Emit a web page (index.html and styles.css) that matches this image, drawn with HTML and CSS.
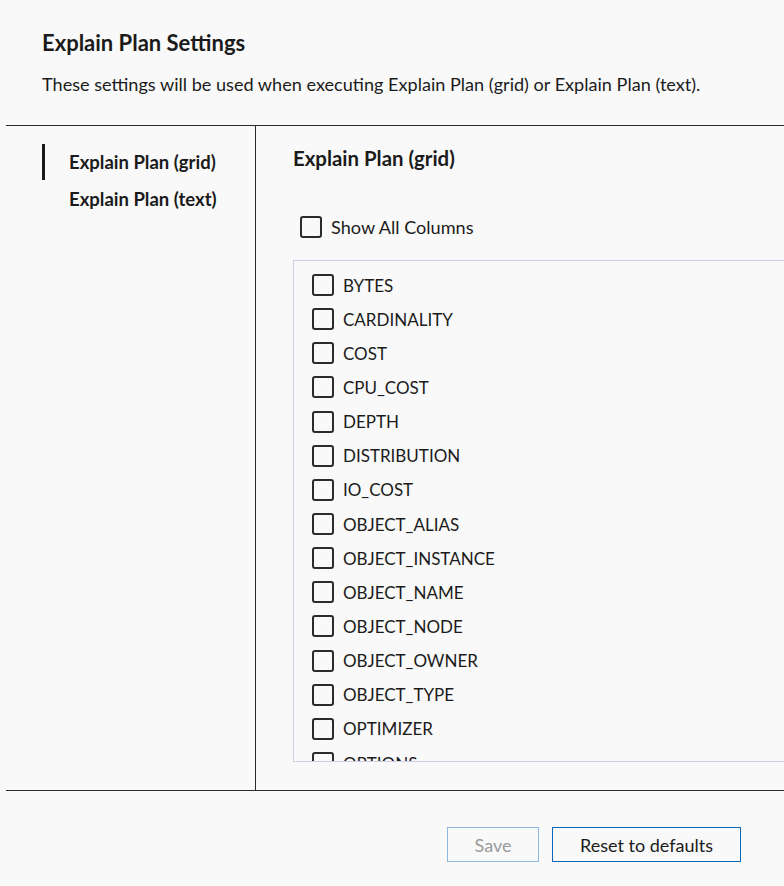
FILE: index.html
```html
<!DOCTYPE html>
<html>
<head>
<meta charset="utf-8">
<link rel="stylesheet" href="styles.css">
</head>
<body>
<div class="page">
  <header class="header">
    <h1 class="title">Explain Plan Settings</h1>
    <p class="desc">These settings will be used when executing Explain Plan (grid) or Explain Plan (text).</p>
  </header>
  <div class="main">
    <nav class="nav">
      <div class="nav-item active">Explain Plan (grid)</div>
      <div class="nav-item">Explain Plan (text)</div>
    </nav>
    <section class="pane">
      <h2 class="pane-title">Explain Plan (grid)</h2>
      <label class="check show-all"><span class="box"></span><span>Show All Columns</span></label>
      <div class="list">
        <label class="check row"><span class="box"></span><span>BYTES</span></label>
        <label class="check row"><span class="box"></span><span>CARDINALITY</span></label>
        <label class="check row"><span class="box"></span><span>COST</span></label>
        <label class="check row"><span class="box"></span><span>CPU_COST</span></label>
        <label class="check row"><span class="box"></span><span>DEPTH</span></label>
        <label class="check row"><span class="box"></span><span>DISTRIBUTION</span></label>
        <label class="check row"><span class="box"></span><span>IO_COST</span></label>
        <label class="check row"><span class="box"></span><span>OBJECT_ALIAS</span></label>
        <label class="check row"><span class="box"></span><span>OBJECT_INSTANCE</span></label>
        <label class="check row"><span class="box"></span><span>OBJECT_NAME</span></label>
        <label class="check row"><span class="box"></span><span>OBJECT_NODE</span></label>
        <label class="check row"><span class="box"></span><span>OBJECT_OWNER</span></label>
        <label class="check row"><span class="box"></span><span>OBJECT_TYPE</span></label>
        <label class="check row"><span class="box"></span><span>OPTIMIZER</span></label>
        <label class="check row"><span class="box"></span><span>OPTIONS</span></label>
      </div>
    </section>
  </div>
  <footer class="footer">
    <button class="btn btn-disabled" disabled>Save</button>
    <button class="btn btn-primary">Reset to defaults</button>
  </footer>
</div>
</body>
</html>
```

FILE: styles.css
```css
html, body {
  margin: 0;
  padding: 0;
  background: #f9f9f9;
  overflow: hidden;
}
body {
  font-family: Lato, "Open Sans", sans-serif;
  color: #1b1b1b;
  width: 784px;
  height: 886px;
}
.page {
  display: flex;
  flex-direction: column;
  padding-left: 6px;
}
.header {
  padding: 28px 0 0 36px;
  height: 97px;
  border-bottom: 1px solid #2b2b2b;
}
.title {
  margin: 0;
  font-size: 22px;
  font-weight: 700;
  line-height: 30px;
}
.desc {
  margin: 15px 0 0;
  font-size: 18.1px;
  line-height: 22px;
}
.main {
  display: flex;
  height: 664px;
  border-bottom: 1px solid #2b2b2b;
}
.nav {
  flex: none;
  width: 250px;
  border-right: 1px solid #2b2b2b;
  padding: 18px 0 0 36px;
  box-sizing: border-box;
}
.nav-item {
  font-size: 18.5px;
  font-weight: 700;
  line-height: 20px;
  padding: 8px 0 8px 24px;
  border-left: 3px solid transparent;
  white-space: nowrap;
}
.nav-item.active {
  border-left-color: #1b1b1b;
}
.nav-item + .nav-item {
  padding-top: 9px;
}
.pane {
  flex: 1;
  min-width: 0;
  padding: 20px 0 0 37px;
}
.pane-title {
  margin: 0;
  font-size: 20.4px;
  font-weight: 700;
  line-height: 24px;
}
.check {
  display: flex;
  align-items: center;
  font-size: 17px;
  white-space: nowrap;
}
.box {
  width: 18px;
  height: 18px;
  border: 2px solid #2b2b2b;
  border-radius: 3px;
  margin-right: 9px;
  flex: none;
  background: #f9f9f9;
}
.show-all {
  margin: 46px 0 0 7px;
  height: 22px;
  font-size: 18.1px;
}
.list {
  margin-top: 22px;
  height: 502px;
  overflow: hidden;
  border: 1px solid #cfcfe6;
  border-right: none;
  padding: 7px 0 0 18px;
  box-sizing: border-box;
}
.row {
  height: 34.15px;
  flex: none;
}
.footer {
  display: flex;
  justify-content: flex-end;
  gap: 13px;
  padding: 36px 43px 0 0;
}
.btn {
  font-family: inherit;
  font-size: 18px;
  height: 35px;
  background: #f9f9f9;
  color: #1b1b1b;
  padding: 0;
  border-radius: 0;
}
.btn-disabled {
  border: 1px solid #8db7dc;
  color: #9a9a9a;
  width: 92px;
}
.btn-primary {
  border: 1px solid #0a66b8;
  width: 189px;
}
```
